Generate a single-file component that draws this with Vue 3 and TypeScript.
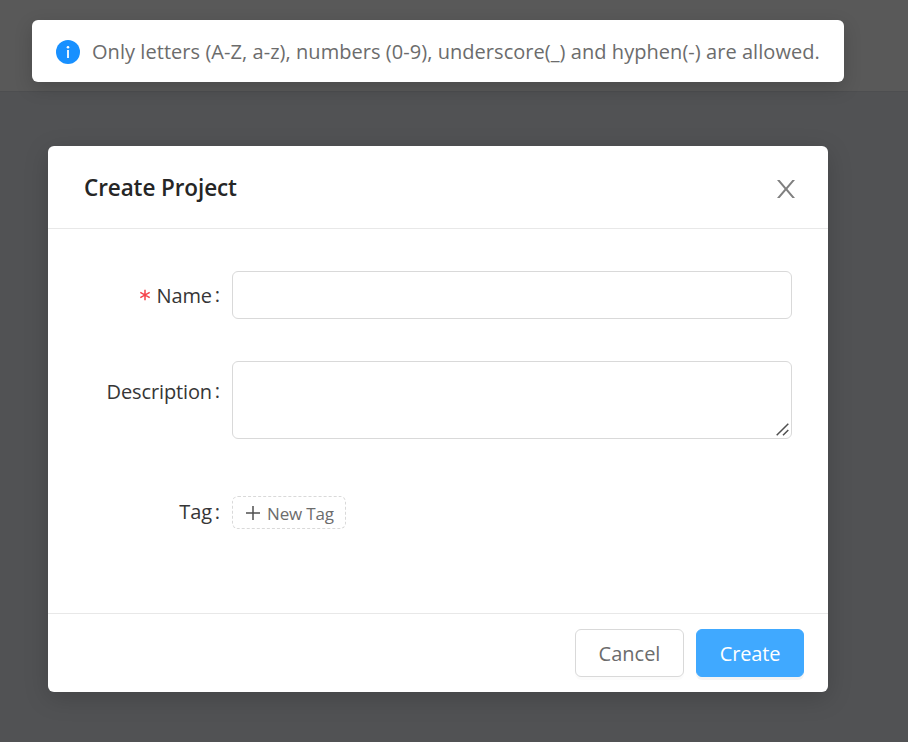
<script setup lang="ts">
import { ref } from 'vue'

const name = ref('')
const description = ref('')
</script>

<template>
  <div class="page">
    <header class="topbar"></header>

    <div class="message" role="status">
      <svg class="info" viewBox="0 0 24 24" aria-hidden="true">
        <circle cx="12" cy="12" r="12" fill="#1890ff" />
        <rect x="11.1" y="10" width="1.8" height="8" fill="#fff" />
        <circle cx="12" cy="7.2" r="1.3" fill="#fff" />
      </svg>
      <span class="message-text">Only letters (A-Z, a-z), numbers (0-9), underscore(_) and hyphen(-) are allowed.</span>
    </div>

    <section class="modal" role="dialog">
      <header class="modal-header">
        <h1 class="title">Create Project</h1>
        <button class="close" type="button" aria-label="Close">
          <svg viewBox="0 0 18 18" width="18" height="18">
            <path d="M0 0H2.6L9 7.4 15.4 0H18L10.4 9 18 18H15.4L9 10.6 2.6 18H0L7.6 9Z" fill="#808080" />
          </svg>
        </button>
      </header>

      <form class="body" @submit.prevent>
        <div class="row row-name">
          <label class="label" for="name">
            <svg class="star" viewBox="0 0 12 12" width="12" height="12">
              <path d="M6 .8V11.2M1.3 3.3 10.7 8.7M1.3 8.7 10.7 3.3" stroke="#f5434b" stroke-width="1.5" />
            </svg>
            <span class="label-text">Name</span><span class="colon">:</span>
          </label>
          <input id="name" v-model="name" class="field" type="text" />
        </div>
        <div class="row row-desc">
          <label class="label" for="desc"><span class="label-text">Description</span><span class="colon">:</span></label>
          <div class="area-wrap">
            <textarea id="desc" v-model="description" class="field area"></textarea>
            <svg class="grip" viewBox="0 0 13 13" width="13" height="13">
              <path d="M.7 12.3 12.3.7M7 12.3 12.3 7" stroke="#505050" stroke-width="1.5" />
            </svg>
          </div>
        </div>
        <div class="row row-tag">
          <span class="label"><span class="label-text">Tag</span><span class="colon">:</span></span>
          <button class="tag" type="button">
            <svg viewBox="0 0 14 14" width="14" height="14">
              <path d="M7 0V14M0 7H14" stroke="#505050" stroke-width="1.5" />
            </svg>
            <span class="new-tag">New Tag</span>
          </button>
        </div>
      </form>

      <footer class="footer">
        <button class="btn" type="button">Cancel</button>
        <button class="btn primary" type="button">Create</button>
      </footer>
    </section>
  </div>
</template>

<style>
body {
  margin: 0;
  background: #515254;
}
</style>

<style scoped>
.page,
.page * {
  box-sizing: border-box;
}
.page {
  position: relative;
  height: 742px;
  overflow: hidden;
  background: #515254;
  font-family: 'Open Sans', 'Noto Sans', sans-serif;
  font-size: 20px;
}
.page button {
  font-family: inherit;
  cursor: pointer;
}
.topbar {
  height: 92px;
  background: #595959;
  border-bottom: 1px solid #4d4e50;
}
.message {
  position: absolute;
  left: 32px;
  top: 20px;
  width: 812px;
  height: 62px;
  padding-left: 24px;
  display: flex;
  align-items: center;
  background: #fff;
  border-radius: 6px;
  box-shadow: 0 6px 18px rgba(0, 0, 0, 0.17);
  color: #6c6c6c;
  white-space: nowrap;
}
.message-text {
  letter-spacing: 0.05px;
}
.info {
  width: 24px;
  height: 24px;
  margin-right: 12px;
  margin-top: 1px;
}
.modal {
  position: absolute;
  left: 48px;
  top: 146px;
  width: 780px;
  height: 546px;
  display: flex;
  flex-direction: column;
  background: #fff;
  border-radius: 6px;
  box-shadow: 0 6px 24px rgba(0, 0, 0, 0.17);
}
.modal-header {
  height: 83px;
  padding: 0 33px 0 36px;
  display: flex;
  align-items: center;
  justify-content: space-between;
  border-bottom: 1px solid #e8e8e8;
}
.title {
  margin: 0;
  color: #262626;
  font-size: 22.5px;
  font-weight: 600;
  letter-spacing: -0.1px;
}
.close {
  padding: 0;
  border: 0;
  background: none;
  line-height: 0;
  margin-top: 3px;
}
.body {
  flex: 1;
  padding: 42px 36px 0 0;
}
.row {
  display: flex;
}
.label {
  width: 184px;
  padding-right: 12px;
  display: flex;
  justify-content: flex-end;
  align-items: center;
  color: #363636;
}
.label-text {
  letter-spacing: -0.12px;
}
.colon {
  width: 8px;
  text-align: right;
  line-height: 1;
}
.star {
  margin-right: 6px;
}
.row-name {
  height: 48px;
  margin-bottom: 42px;
}
.row-desc {
  height: 78px;
  margin-bottom: 57px;
}
.row-desc .label {
  height: 60px;
}
.row-tag {
  height: 33px;
}
.row-tag .label {
  height: 31px;
}
.field {
  display: block;
  width: 560px;
  height: 48px;
  padding: 6px 16px;
  border: 1px solid #d9d9d9;
  border-radius: 6px;
  outline: none;
  background: #fff;
  font: inherit;
}
.area {
  height: 78px;
  resize: none;
}
.area-wrap {
  position: relative;
}
.grip {
  position: absolute;
  right: 3px;
  bottom: 3px;
}
.tag {
  width: 114px;
  height: 33px;
  padding: 0 0 0 13px;
  display: flex;
  align-items: center;
  gap: 7px;
  border: 1px dashed #d9d9d9;
  border-radius: 6px;
  background: #fff;
  color: #6c6c6c;
  font-size: 17px;
  letter-spacing: -0.15px;
  white-space: nowrap;
}
.tag svg {
  flex: none;
}
.new-tag {
  padding-top: 1px;
}
.footer {
  height: 79px;
  padding: 15px 24px 0;
  display: flex;
  justify-content: flex-end;
  gap: 12px;
  border-top: 1px solid #e8e8e8;
}
.btn {
  width: 109px;
  height: 48px;
  padding: 0;
  border: 1px solid #d9d9d9;
  border-radius: 6px;
  background: #fff;
  box-shadow: 0 3px 0 rgba(0, 0, 0, 0.016);
  color: #6c6c6c;
  font-size: 20px;
}
.primary {
  width: 108px;
  border-color: #40a9ff;
  background: #40a9ff;
  box-shadow: 0 3px 0 rgba(0, 0, 0, 0.045);
  color: #fff;
  letter-spacing: -0.15px;
}
</style>
